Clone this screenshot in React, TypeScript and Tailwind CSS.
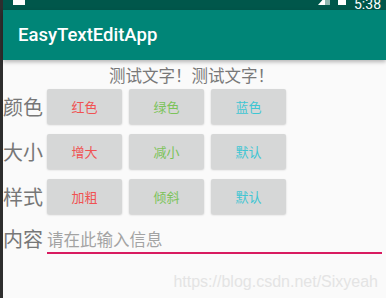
import React from 'react'

const cjk = { fontFamily: '"Noto Sans CJK SC", "Noto Sans", sans-serif' }

type Btn = { label: string; color: string }

const rows: { title: string; buttons: Btn[] }[] = [
  {
    title: '颜色',
    buttons: [
      { label: '红色', color: 'text-[#f05252]' },
      { label: '绿色', color: 'text-[#7cc35a]' },
      { label: '蓝色', color: 'text-[#3fc6d3]' },
    ],
  },
  {
    title: '大小',
    buttons: [
      { label: '增大', color: 'text-[#f05252]' },
      { label: '减小', color: 'text-[#7cc35a]' },
      { label: '默认', color: 'text-[#3fc6d3]' },
    ],
  },
  {
    title: '样式',
    buttons: [
      { label: '加粗', color: 'text-[#f05252]' },
      { label: '倾斜', color: 'text-[#7cc35a]' },
      { label: '默认', color: 'text-[#3fc6d3]' },
    ],
  },
]

export default function App() {
  return (
    <div className="relative flex w-[386px] h-[298px] overflow-hidden bg-[#fafafa]" style={cjk}>
      {/* left edge */}
      <div className="w-[3px] h-full bg-[#2e2e2e] shrink-0" />

      <div className="flex flex-col flex-1">
        {/* status bar */}
        <div className="relative flex items-end h-[10px] overflow-hidden bg-[#00574b]">
          <div className="ml-[10px] mb-[5px] w-[12px] h-[10px] bg-white" />
          <div className="flex-1" />
          <div className="mb-[5px] w-0 h-0 border-l-[7px] border-l-transparent border-b-[8px] border-b-white" />
          <div className="mb-[5px] w-[5px] h-[8px] bg-[#8fb7b0]" />
          <div className="ml-[8px] mb-[5px] w-[8px] h-[10px] bg-white" />
          <div
            className="ml-[8px] mr-[5px] -mb-[1px] text-[14px] leading-[14px] text-white"
            style={{ fontFamily: 'Roboto, sans-serif' }}
          >
            5:38
          </div>
        </div>

        {/* toolbar */}
        <div className="relative z-10 flex items-center h-[50px] pl-[15px] pt-[2px] bg-[#008577] shadow-[0_2px_4px_rgba(0,0,0,0.28)]">
          <span
            className="text-[18.5px] font-medium text-white"
            style={{ fontFamily: 'Roboto, sans-serif' }}
          >
            EasyTextEditApp
          </span>
        </div>

        {/* sample text */}
        <div className="h-[24px] pt-[6px] pr-[6px] text-center text-[16.5px] leading-[18px] text-[#787878]">
          测试文字！测试文字！
        </div>

        {/* button rows */}
        {rows.map((row) => (
          <div key={row.title} className="flex items-center h-[45px]">
            <div className="w-[44px] text-[20px] leading-[24px] text-[#777]">{row.title}</div>
            <div className="flex gap-[7px]">
              {row.buttons.map((b, i) => (
                <button
                  key={i}
                  className={`w-[75px] h-[35px] rounded-[2px] bg-[#d6d7d7] shadow-[0_1px_2px_rgba(0,0,0,0.18)] text-[13px] ${b.color}`}
                >
                  {b.label}
                </button>
              ))}
            </div>
          </div>
        ))}

        {/* input row */}
        <div className="flex mt-[8px]">
          <div className="w-[44px] h-[24px] text-[20px] leading-[24px] text-[#777]">内容</div>
          <div className="w-[335px] h-[27px] border-b-[2px] border-[#d81b60]">
            <input
              className="w-full h-[24px] bg-transparent outline-none text-[16.5px] leading-[24px] text-[#555] placeholder:text-[#a3a3a3]"
              placeholder="请在此输入信息"
              style={cjk}
            />
          </div>
        </div>
      </div>

      {/* watermark */}
      <div
        className="absolute right-[8px] top-[270px] text-[16px] text-[#e4e4e4]"
        style={{ fontFamily: '"Liberation Sans", Arial, sans-serif' }}
      >
        https://blog.csdn.net/Sixyeah
      </div>
    </div>
  )
}
